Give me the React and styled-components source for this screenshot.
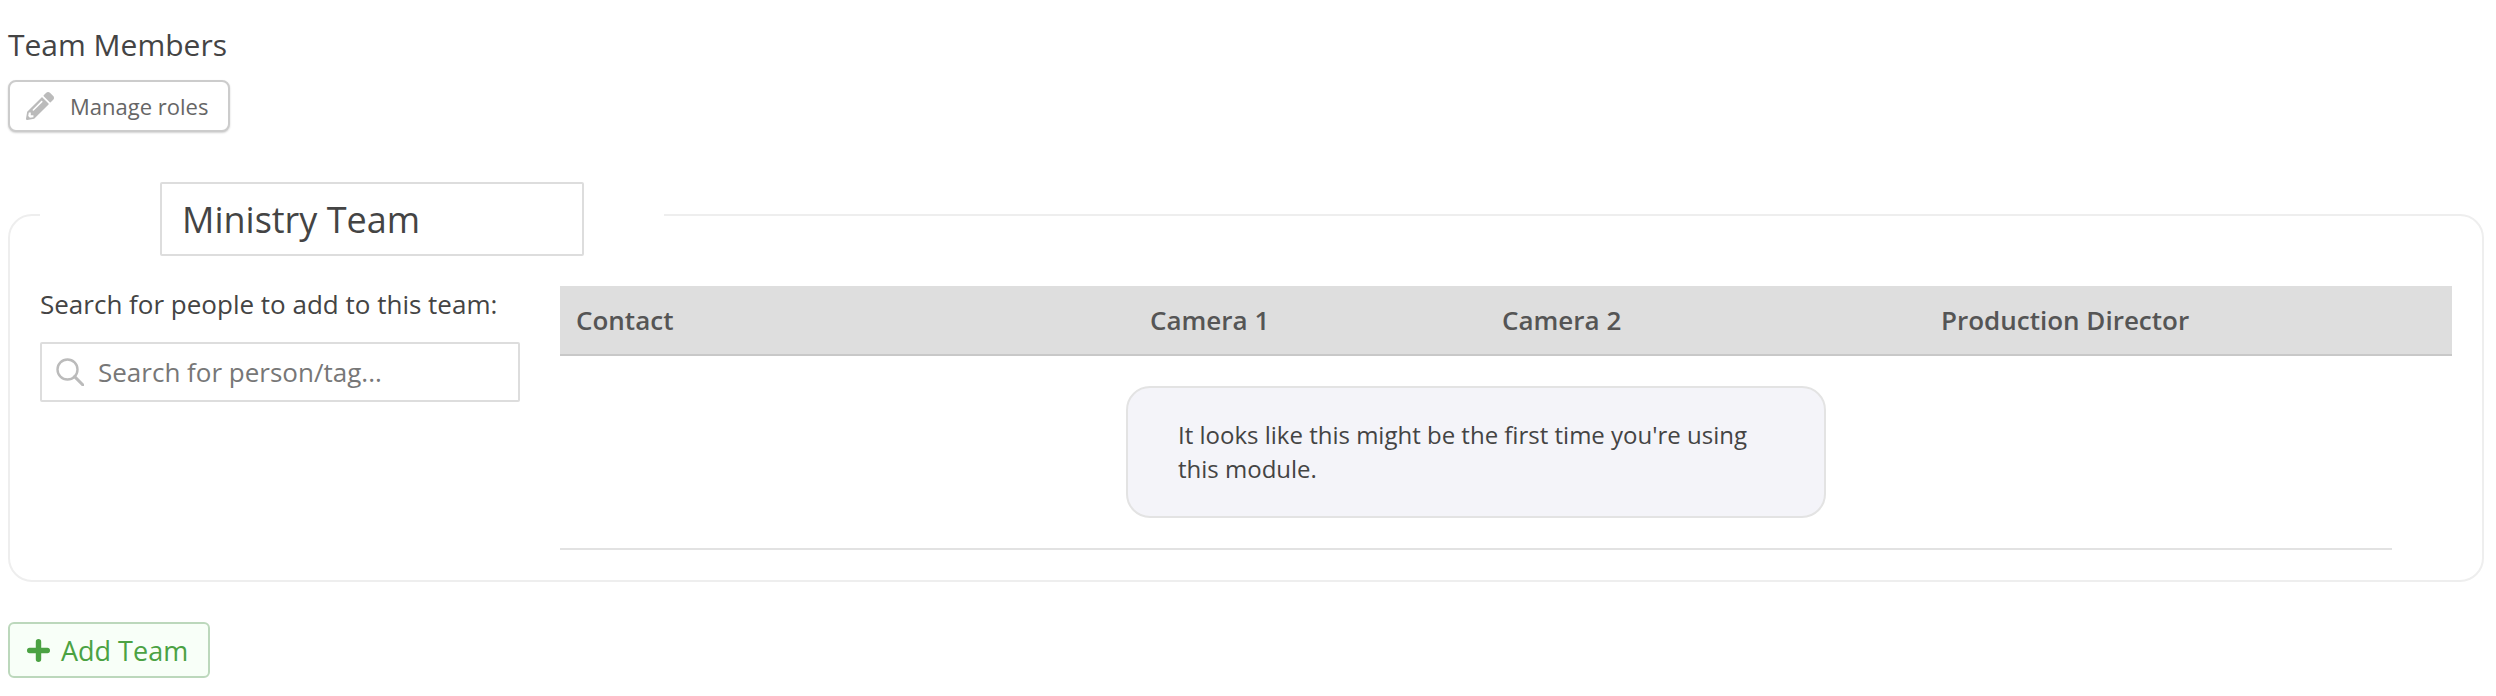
import React from "react";
import styled, { createGlobalStyle } from "styled-components";
import { FaPencilAlt } from "react-icons/fa";

const Global = createGlobalStyle`
  html, body { margin: 0; padding: 0; background: #fff; }
  body { font-family: "Open Sans", "Liberation Sans", sans-serif; color: #444; }
  * { box-sizing: border-box; }
`;

const Page = styled.div`
  width: 2496px;
  height: 696px;
  padding: 24px 12px 0 8px;
  overflow: hidden;
`;

const Title = styled.h2`
  margin: 0;
  font-size: 30px;
  line-height: 42px;
  font-weight: 400;
  color: #444;
`;

const ManageButton = styled.button`
  display: flex;
  align-items: center;
  gap: 16px;
  width: 222px;
  height: 52px;
  margin: 14px 0 0;
  padding: 0 16px;
  background: #fff;
  border: 2px solid #ccc;
  border-radius: 8px;
  box-shadow: 0 1px 2px rgba(0, 0, 0, 0.18);
  font: 400 22px "Open Sans", sans-serif;
  color: #666;
  svg { color: #bbb; flex: none; }
`;

const TeamBox = styled.fieldset`
  width: 2476px;
  height: 400px;
  margin: 50px 0 0;
  padding: 0 30px 0 30px;
  min-width: 0;
  border: 2px solid #eee;
  border-radius: 24px;
`;

const TeamLegend = styled.legend`
  height: 66px;
  margin: 0;
  padding: 0 80px 0 120px;
`;

const TeamName = styled.div`
  width: 424px;
  height: 74px;
  padding: 0 20px;
  display: flex;
  align-items: center;
  background: #fff;
  border: 2px solid #ddd;
  border-radius: 2px;
  font-size: 36px;
  color: #444;
`;

const Columns = styled.div`
  display: flex;
  align-items: flex-start;
  margin-top: 38px;
`;

const SearchPane = styled.div`
  width: 480px;
  flex: none;
  margin-right: 40px;
`;

const SearchLabel = styled.div`
  font-size: 26px;
  line-height: 36px;
  color: #444;
  white-space: nowrap;
`;

const SearchField = styled.div`
  display: flex;
  align-items: center;
  gap: 14px;
  height: 60px;
  margin-top: 20px;
  padding: 0 14px;
  border: 2px solid #ddd;
  border-radius: 2px;
  font-size: 26px;
  color: #777;
  svg { flex: none; }
`;

const TablePane = styled.div`
  width: 1892px;
  flex: none;
`;

const HeaderRow = styled.div`
  display: grid;
  grid-template-columns: 574px 352px 439px 1fr;
  height: 70px;
  align-items: center;
  background: #dedede;
  border-bottom: 2px solid #c8c8c8;
`;

const HeaderCell = styled.div`
  padding-left: 16px;
  font-size: 26px;
  font-weight: 600;
  color: #555;
  white-space: nowrap;
`;

const TableBody = styled.div`
  width: 1832px;
  padding: 30px 0 30px 566px;
  border-bottom: 2px solid #e2e2e2;
`;

const Notice = styled.div`
  width: 700px;
  height: 132px;
  padding: 30px 40px 0 50px;
  background: #f4f4f9;
  border: 2px solid #e3e3e3;
  border-radius: 24px;
  font-size: 24px;
  line-height: 34px;
  color: #444;
`;

const AddButton = styled.button`
  display: flex;
  align-items: center;
  gap: 11px;
  width: 202px;
  height: 56px;
  margin: 40px 0 0;
  padding: 0 0 0 17px;
  background: #f8fff8;
  border: 2px solid #bcd8bc;
  border-radius: 6px;
  font: 400 27px "Open Sans", sans-serif;
  color: #4ba243;
  svg { flex: none; }
`;

const SearchIcon = () => (
  <svg width="28" height="28" viewBox="0 0 28 28" fill="none" stroke="#bbb" strokeWidth="2.4" strokeLinecap="round">
    <circle cx="11.5" cy="11.5" r="10" />
    <path d="M18.6 18.6 L27 27" strokeWidth="3" />
  </svg>
);

const PlusIcon = () => (
  <svg width="23" height="23" viewBox="0 0 23 23" fill="none" stroke="#4ba243" strokeWidth="5.4" strokeLinecap="round">
    <path d="M11.5 2.7 V20.3 M2.7 11.5 H20.3" />
  </svg>
);

export default function App() {
  return (
    <Page>
      <Global />
      <Title>Team Members</Title>
      <ManageButton>
        <FaPencilAlt size={28} />
        Manage roles
      </ManageButton>
      <TeamBox>
        <TeamLegend>
          <TeamName>Ministry Team</TeamName>
        </TeamLegend>
        <Columns>
          <SearchPane>
            <SearchLabel>Search for people to add to this team:</SearchLabel>
            <SearchField>
              <SearchIcon />
              Search for person/tag...
            </SearchField>
          </SearchPane>
          <TablePane>
            <HeaderRow>
              <HeaderCell>Contact</HeaderCell>
              <HeaderCell>Camera 1</HeaderCell>
              <HeaderCell>Camera 2</HeaderCell>
              <HeaderCell>Production Director</HeaderCell>
            </HeaderRow>
            <TableBody>
              <Notice>It looks like this might be the first time you're using this module.</Notice>
            </TableBody>
          </TablePane>
        </Columns>
      </TeamBox>
      <AddButton>
        <PlusIcon />
        Add Team
      </AddButton>
    </Page>
  );
}
